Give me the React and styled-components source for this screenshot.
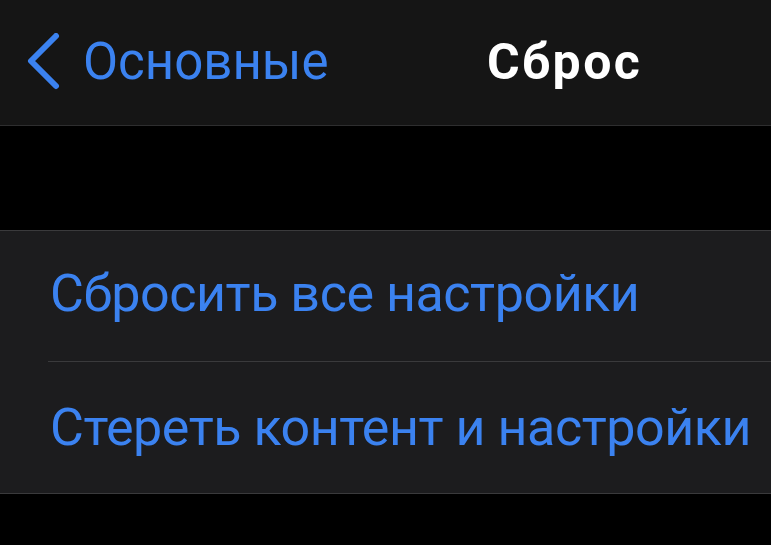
import React from 'react';
import styled, { createGlobalStyle } from 'styled-components';

const GlobalStyle = createGlobalStyle`
    html, body {
        margin: 0;
        padding: 0;
        background: #000;
    }
    body {
        font-family: Roboto, 'Liberation Sans', sans-serif;
        -webkit-font-smoothing: antialiased;
    }
`;

const BackChevron = () => (
    <svg width="36" height="58" viewBox="0 0 36 58" fill="none">
        <path
            d="M31 3 L6 28 L31 53"
            stroke="#3b82f0"
            strokeWidth="6"
            strokeLinecap="round"
            strokeLinejoin="round"
        />
    </svg>
);

const App = () => {
    return (
        <Screen>
            <GlobalStyle />
            <NavBar>
                <BackButton>
                    <BackChevron />
                    <BackLabel>Основные</BackLabel>
                </BackButton>
                <Title>Сброс</Title>
            </NavBar>
            <Spacer />
            <Group>
                <Row>
                    <RowLabel>Сбросить все настройки</RowLabel>
                </Row>
                <Row last>
                    <RowLabel>Стереть контент и настройки</RowLabel>
                </Row>
            </Group>
        </Screen>
    );
};

const Screen = styled.div`
    width: 771px;
    height: 545px;
    overflow: hidden;
    background: #000;
`;

const NavBar = styled.div`
    display: flex;
    align-items: center;
    height: 126px;
    padding: 0 0 2px 25px;
    box-sizing: border-box;
    background: #151515;
    border-bottom: 1px solid #2e2e2f;
`;

const BackButton = styled.div`
    display: flex;
    align-items: center;
    gap: 22px;
    width: 462px;
`;

const BackLabel = styled.span`
    color: #3b82f0;
    font-size: 51px;
    line-height: 1;
`;

const Title = styled.span`
    color: #fff;
    font-size: 50px;
    font-weight: 700;
    line-height: 1;
    letter-spacing: 2.4px;
`;

const Spacer = styled.div`
    height: 104px;
`;

const Group = styled.div`
    background: #1c1c1e;
    border-top: 1px solid #3a3a3c;
    border-bottom: 1px solid #3a3a3c;
`;

const Row = styled.div`
    display: flex;
    align-items: center;
    height: 131px;
    margin-left: 48px;
    padding: 0 0 ${(p) => (p.last ? '0' : '4px')} 2px;
    box-sizing: border-box;
    border-bottom: ${(p) => (p.last ? 'none' : '1px solid #3a3a3c')};
`;

const RowLabel = styled.span`
    color: #3b82f0;
    font-size: 52px;
    line-height: 1;
    letter-spacing: -0.45px;
    white-space: nowrap;
`;

export default App;
